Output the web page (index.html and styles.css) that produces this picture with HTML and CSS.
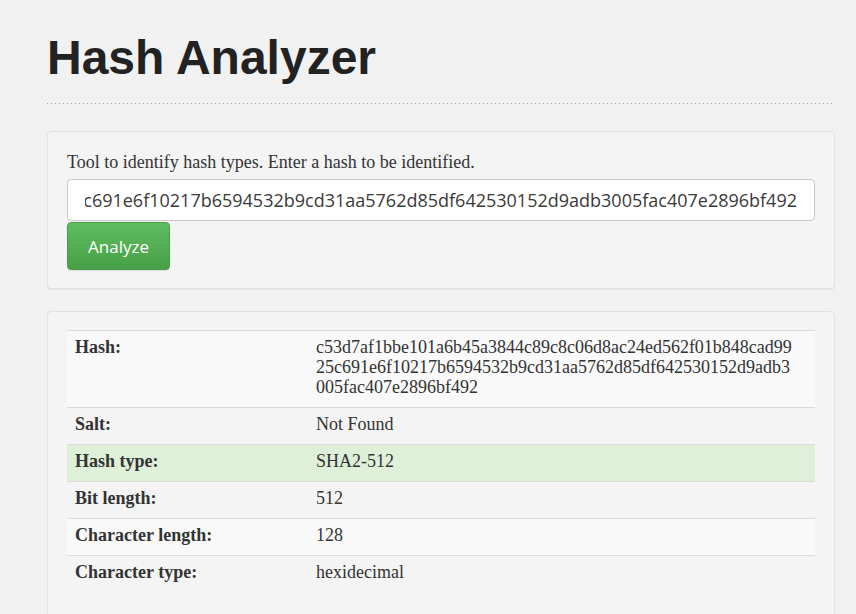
FILE: index.html
```html
<!DOCTYPE html>
<html lang="en">
<head>
<meta charset="utf-8">
<title>Hash Analyzer</title>
<link rel="stylesheet" href="styles.css">
</head>
<body>
<div class="container">
  <header class="page-header">
    <h1 class="title">Hash Analyzer</h1>
  </header>
  <section class="well">
    <p class="intro">Tool to identify hash types. Enter a hash to be identified.</p>
    <input class="hash-input" type="text" value="c53d7af1bbe101a6b45a3844c89c8c06d8ac24ed562f01b848cad9925c691e6f10217b6594532b9cd31aa5762d85df642530152d9adb3005fac407e2896bf492" readonly>
    <button class="btn-analyze" type="button">Analyze</button>
  </section>
  <section class="well well-result">
    <table class="result">
      <tbody>
        <tr>
          <th>Hash:</th>
          <td class="hash-value"><span>c53d7af1bbe101a6b45a3844c89c8c06d8ac24ed562f01b848cad99</span><span>25c691e6f10217b6594532b9cd31aa5762d85df642530152d9adb3</span><span>005fac407e2896bf492</span></td>
        </tr>
        <tr>
          <th>Salt:</th>
          <td>Not Found</td>
        </tr>
        <tr class="success">
          <th>Hash type:</th>
          <td>SHA2-512</td>
        </tr>
        <tr>
          <th>Bit length:</th>
          <td>512</td>
        </tr>
        <tr>
          <th>Character length:</th>
          <td>128</td>
        </tr>
        <tr>
          <th>Character type:</th>
          <td>hexidecimal</td>
        </tr>
      </tbody>
    </table>
  </section>
</div>
</body>
</html>
```

FILE: styles.css
```css
html, body {
  margin: 0;
  padding: 0;
}
body {
  background: #f1f1f1;
  color: #333;
  font-family: "Liberation Serif", "Times New Roman", serif;
  font-size: 18px;
  line-height: 20px;
}
.container {
  padding: 0 21px 0 47px;
}
.page-header {
  padding: 31px 0 20px;
  background-image: repeating-linear-gradient(to right, #a5a5a5 0, #a5a5a5 1px, transparent 1px, transparent 4px);
  background-size: 100% 1px;
  background-repeat: no-repeat;
  background-position: left bottom;
  margin-bottom: 27px;
}
.title {
  margin: 0;
  font-family: "Liberation Sans", Arial, sans-serif;
  font-weight: bold;
  font-size: 48px;
  line-height: 53px;
  color: #222;
}
.well {
  background: #f4f4f4;
  border: 1px solid #e2e2e2;
  border-radius: 4px;
  box-shadow: 0 1px 1px rgba(0,0,0,0.04);
  padding: 20px 19px 18px;
  margin-bottom: 22px;
}
.intro {
  margin: 0 0 7px;
}
.hash-input {
  display: block;
  box-sizing: border-box;
  width: 100%;
  height: 42px;
  margin: 0;
  padding: 0 17px;
  border: 1px solid #c9c9c9;
  border-radius: 4px;
  background: #fff;
  color: #3a3a3a;
  font-family: "Open Sans", sans-serif;
  font-size: 18px;
  direction: rtl;
  text-align: left;
  outline: none;
}
.btn-analyze {
  display: block;
  box-sizing: border-box;
  width: 103px;
  height: 48px;
  margin: 1px 0 0;
  padding: 0;
  border: 1px solid #4a9a4a;
  border-radius: 4px;
  background: linear-gradient(to bottom, #60bd60 0%, #47a047 100%);
  color: #fff;
  font-family: "Open Sans", sans-serif;
  font-size: 17px;
  box-shadow: 0 1px 1px rgba(0,0,0,0.08);
}
.well-result {
  padding: 18px 19px 20px;
  min-height: 300px;
}
.result {
  width: 100%;
  border-collapse: collapse;
  border-spacing: 0;
}
.result th,
.result td {
  padding: 6px 8px 10px;
  border-top: 1px solid #dcdcdc;
  vertical-align: top;
  text-align: left;
}
.result th {
  width: 225px;
  font-weight: bold;
}
.result tr:nth-child(odd) {
  background: #f9f9f9;
}
.result tr.success {
  background: #dff0d8;
}
.hash-value span {
  display: block;
}
```
